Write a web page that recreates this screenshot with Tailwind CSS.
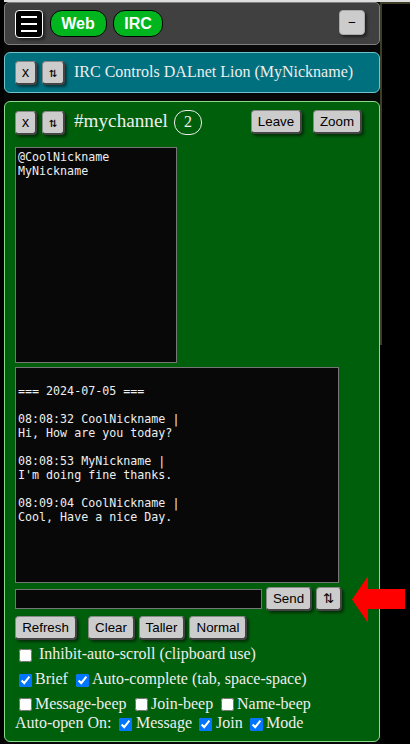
<!DOCTYPE html>
<html lang="en"><head><meta charset="utf-8"><title>IRC</title>
<script src="https://cdn.jsdelivr.net/npm/@tailwindcss/browser@4"></script></head>
<body class="bg-black w-[410px] h-[744px] overflow-hidden relative font-['Liberation_Serif',serif] text-[16px] leading-[18px] text-[#eeeeee]">
<div class="ml-[4px] h-[2px] bg-[#dedede]"></div>
<div class="absolute left-[380px] top-[2px] w-[30px] h-[343px] border-t-2 border-l-2 border-[#3e3d27]"></div>
<main class="ml-[4px] w-[376px] h-[742px] bg-[#080808] flex flex-col relative">
  <header class="h-[43px] shrink-0 rounded-[5px] border border-[#808080] bg-[#404040] flex items-start pl-[10px] pr-[14px] pt-[7px] font-['Liberation_Sans',sans-serif]">
    <button class="w-[28px] h-[28px] rounded-[4px] border border-white bg-black shadow-[2px_2px_3px_#202020] flex flex-col items-center justify-center gap-[5px]">
      <span class="w-[16px] h-[2px] bg-white"></span><span class="w-[16px] h-[2px] bg-white"></span><span class="w-[16px] h-[2px] bg-white"></span>
    </button>
    <button class="ml-[7px] w-[57px] h-[27px] rounded-[12px] border border-black bg-[#00b51e] text-white font-bold text-[16px] leading-[25px] pr-[1px]">Web</button>
    <button class="ml-[6px] w-[50px] h-[27px] rounded-[12px] border border-black bg-[#00b51e] text-white font-bold text-[16px] leading-[25px]">IRC</button>
    <button class="ml-auto w-[26px] h-[25px] rounded-[4px] bg-[#cccccc] border border-[#aaaaaa] shadow-[2px_2px_3px_#202020] text-black text-[13.33px] leading-[23px]">−</button>
  </header>
  <section class="mt-[7px] h-[41px] shrink-0 rounded-[6px] border border-[#70c4cd] bg-[#00707f] flex items-start pl-[10px] pt-[8px]">
    <button class="w-[22px] h-[24px] rounded-[4px] bg-[#cccccc] border border-r-2 border-b-2 border-t-[#888888] border-l-[#888888] border-r-[#444444] border-b-[#444444] shadow-[2px_2px_3px_#00000080] text-black font-['DejaVu_Sans_Mono',monospace] text-[13.33px] leading-[21px]">x</button>
    <button class="ml-[5px] w-[23px] h-[24px] rounded-[4px] bg-[#cccccc] border border-r-2 border-b-2 border-t-[#888888] border-l-[#888888] border-r-[#444444] border-b-[#444444] shadow-[2px_2px_3px_#00000080] text-black font-['DejaVu_Sans_Mono',monospace] text-[13.33px] leading-[21px]">⇅</button>
    <span class="ml-[9px] mt-[2px] whitespace-nowrap">IRC Controls DALnet Lion (MyNickname)</span>
  </section>
  <section class="mt-[8px] h-[641px] shrink-0 rounded-[6px] border border-[#8bda8b] bg-[#005f0b] flex flex-col items-start pl-[10px] pt-[8px]">
    <div class="h-[37px] w-full flex items-start">
      <button class="mt-[1px] w-[22px] h-[24px] rounded-[4px] bg-[#cccccc] border border-r-2 border-b-2 border-t-[#888888] border-l-[#888888] border-r-[#444444] border-b-[#444444] shadow-[2px_2px_3px_#00000080] text-black font-['DejaVu_Sans_Mono',monospace] text-[13.33px] leading-[21px]">x</button>
      <button class="mt-[1px] ml-[5px] w-[23px] h-[24px] rounded-[4px] bg-[#cccccc] border border-r-2 border-b-2 border-t-[#888888] border-l-[#888888] border-r-[#444444] border-b-[#444444] shadow-[2px_2px_3px_#00000080] text-black font-['DejaVu_Sans_Mono',monospace] text-[13.33px] leading-[21px]">⇅</button>
      <span class="ml-[9px] w-[100px] text-[19.2px] leading-[22px]">#mychannel</span>
      <span class="w-[28px] h-[25px] rounded-[12px] border border-[#eeeeee] text-center leading-[22px]">2</span>
      <button class="ml-[49px] w-[51px] h-[24px] rounded-[4px] bg-[#cccccc] border border-r-2 border-b-2 border-t-[#888888] border-l-[#888888] border-r-[#444444] border-b-[#444444] shadow-[2px_2px_3px_#00000080] text-black font-['Liberation_Sans',sans-serif] text-[13.33px] leading-[21px]">Leave</button>
      <button class="ml-[11px] w-[49px] h-[24px] rounded-[4px] bg-[#cccccc] border border-r-2 border-b-2 border-t-[#888888] border-l-[#888888] border-r-[#444444] border-b-[#444444] shadow-[2px_2px_3px_#00000080] text-black font-['Liberation_Sans',sans-serif] text-[13.33px] leading-[21px]">Zoom</button>
    </div>
    <pre class="w-[162px] h-[216px] shrink-0 border border-[#767676] bg-[#080808] p-[2px] font-['DejaVu_Sans_Mono',monospace] text-[11.67px] leading-[14px]">@CoolNickname
MyNickname</pre>
    <pre class="mt-[4px] w-[324px] h-[216px] shrink-0 border border-[#767676] bg-[#080808] px-[2px] pt-[16px] font-['DejaVu_Sans_Mono',monospace] text-[11.67px] leading-[14px]">=== 2024-07-05 ===

08:08:32 CoolNickname |
Hi, How are you today?

08:08:53 MyNickname |
I'm doing fine thanks.

08:09:04 CoolNickname |
Cool, Have a nice Day.</pre>
    <div class="mt-[4px] h-[29px] flex items-start">
      <input aria-label="Message" class="mt-[2px] w-[247px] h-[20px] border border-[#767676] bg-[#080808]">
      <button class="ml-[4px] w-[46px] h-[24px] rounded-[4px] bg-[#cccccc] border border-r-2 border-b-2 border-t-[#888888] border-l-[#888888] border-r-[#444444] border-b-[#444444] shadow-[2px_2px_3px_#00000080] text-black font-['Liberation_Sans',sans-serif] text-[13.33px] leading-[21px]">Send</button>
      <button class="ml-[4px] w-[26px] h-[24px] rounded-[4px] bg-[#cccccc] border border-r-2 border-b-2 border-t-[#888888] border-l-[#888888] border-r-[#444444] border-b-[#444444] shadow-[2px_2px_3px_#00000080] text-black font-['DejaVu_Sans',sans-serif] text-[13.33px] leading-[21px]">⇅</button>
    </div>
    <div class="h-[29px] flex items-start">
      <button class="w-[62px] h-[24px] rounded-[4px] bg-[#cccccc] border border-r-2 border-b-2 border-t-[#888888] border-l-[#888888] border-r-[#444444] border-b-[#444444] shadow-[2px_2px_3px_#00000080] text-black font-['Liberation_Sans',sans-serif] text-[13.33px] leading-[21px]">Refresh</button>
      <button class="ml-[11px] w-[47px] h-[24px] rounded-[4px] bg-[#cccccc] border border-r-2 border-b-2 border-t-[#888888] border-l-[#888888] border-r-[#444444] border-b-[#444444] shadow-[2px_2px_3px_#00000080] text-black font-['Liberation_Sans',sans-serif] text-[13.33px] leading-[21px]">Clear</button>
      <button class="ml-[4px] w-[46px] h-[24px] rounded-[4px] bg-[#cccccc] border border-r-2 border-b-2 border-t-[#888888] border-l-[#888888] border-r-[#444444] border-b-[#444444] shadow-[2px_2px_3px_#00000080] text-black font-['Liberation_Sans',sans-serif] text-[13.33px] leading-[21px]">Taller</button>
      <button class="ml-[4px] w-[58px] h-[24px] rounded-[4px] bg-[#cccccc] border border-r-2 border-b-2 border-t-[#888888] border-l-[#888888] border-r-[#444444] border-b-[#444444] shadow-[2px_2px_3px_#00000080] text-black font-['Liberation_Sans',sans-serif] text-[13.33px] leading-[21px] pl-[1px]">Normal</button>
    </div>
    <div class="h-[25px] pl-[4px] flex items-start whitespace-nowrap"><input type="checkbox" class="mt-[4px] mr-[7px] w-[13px] h-[13px]">Inhibit-auto-scroll (clipboard use)</div>
    <div class="h-[25px] pl-[4px] flex items-start whitespace-nowrap"><input type="checkbox" checked class="mt-[4px] mr-[3px] w-[13px] h-[13px]"><span class="w-[41px]">Brief</span><input type="checkbox" checked class="mt-[4px] mr-[3px] w-[13px] h-[13px]">Auto-complete (tab, space-space)</div>
    <div class="h-[19px] pl-[4px] flex items-start whitespace-nowrap"><input type="checkbox" class="mt-[3px] mr-[3px] w-[13px] h-[13px]"><span class="w-[100px]">Message-beep</span><input type="checkbox" class="mt-[3px] mr-[3px] w-[13px] h-[13px]"><span class="w-[70px]">Join-beep</span><input type="checkbox" class="mt-[3px] mr-[3px] w-[13px] h-[13px]">Name-beep</div>
    <div class="flex items-start whitespace-nowrap"><span class="w-[104px]">Auto-open On:</span><input type="checkbox" checked class="mt-[4px] mr-[4px] w-[13px] h-[13px]"><span class="w-[63px]">Message</span><input type="checkbox" checked class="mt-[4px] mr-[4px] w-[13px] h-[13px]"><span class="w-[34px]">Join</span><input type="checkbox" checked class="mt-[4px] mr-[3px] w-[13px] h-[13px]">Mode</div>
  </section>
</main>
<svg class="absolute left-[352px] top-[575px]" width="54" height="49"><path fill="#f00" d="M0 24.500L16 1V14H53V34H16V48Z"/></svg>
</body></html>
